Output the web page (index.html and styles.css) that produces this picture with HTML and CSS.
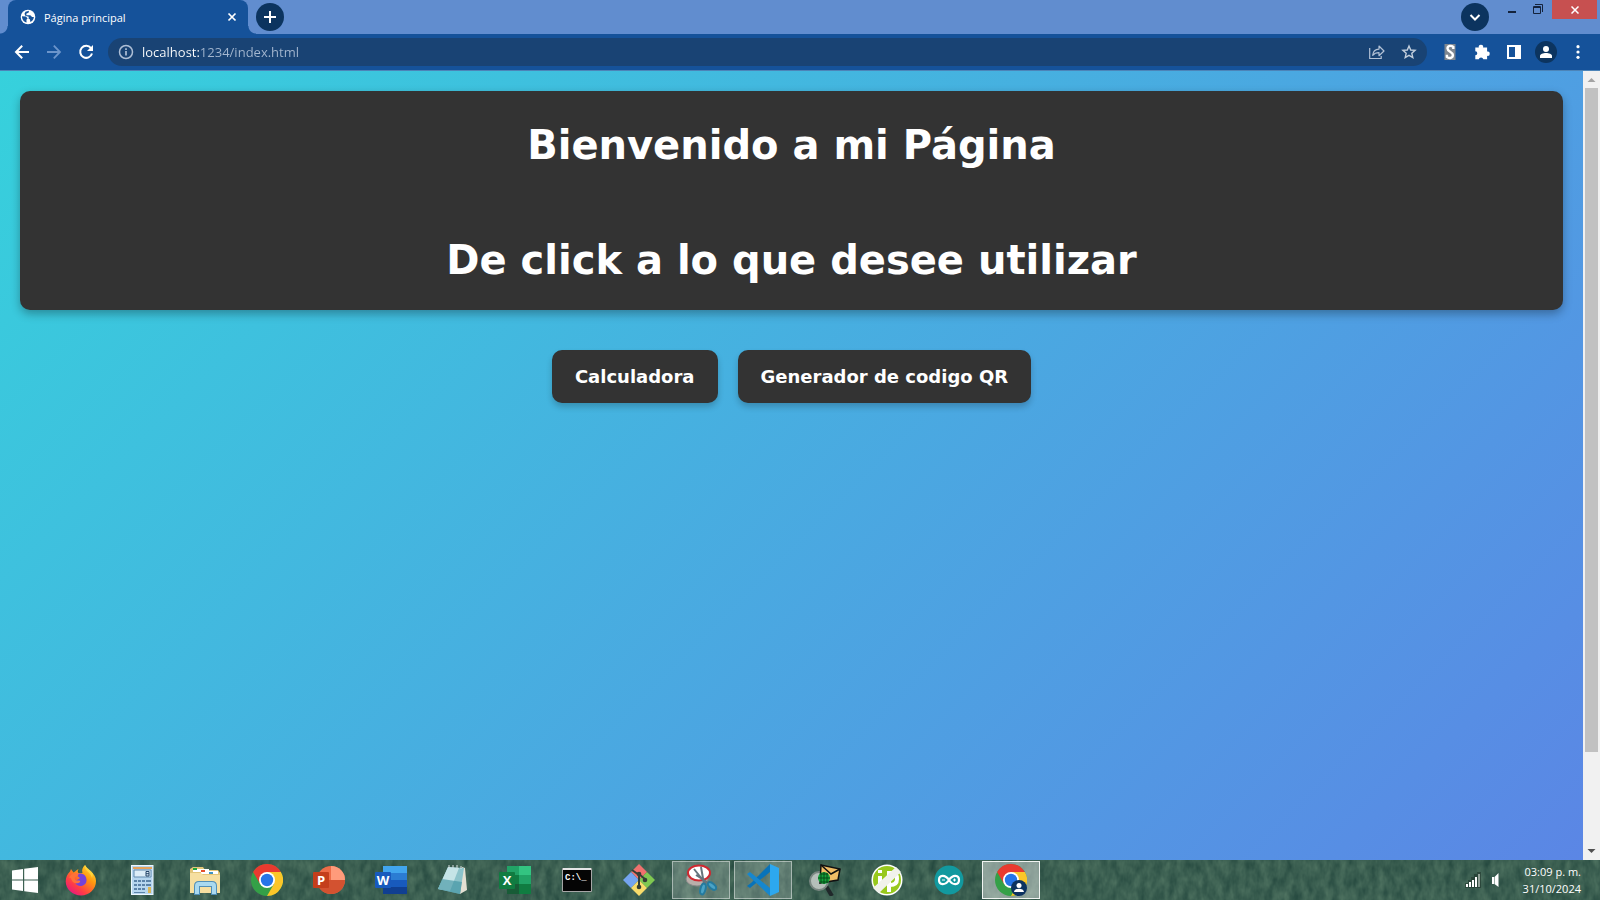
FILE: index.html
```
<!DOCTYPE html>
<html lang="es">
<head>
<meta charset="utf-8">
<title>Página principal</title>
<link rel="stylesheet" href="styles.css">
</head>
<body>
<div class="desktop">
  <header class="tabstrip">
    <div class="tab">
      <svg class="i18" viewBox="0 0 18 18"><circle cx="9" cy="9" r="7.3" fill="#fff"/><path d="M3 8.2l4 .3 1.6 2-1.2 1.3.2 2.6C5 14 3 11.500 3 8.200zM6.500 3.700L10 2.800l-.5 2-2 .8-.2 1.600 4 .1 1.800 1.600 1.800.2c-.2 2.500-1.800 4.400-3.600 5l-.3-2.500-1.500-1.200.3-1.700-3.500-1-.8-2z" fill="#15529a"/></svg>
      <span class="tab-title">Página principal</span>
      <button class="plain" aria-label="Cerrar pestaña"><svg class="i10" viewBox="0 0 10 10"><path d="M1.500 1.500l7 7M8.500 1.500l-7 7" stroke="#fff" stroke-width="1.700"/></svg></button>
    </div>
    <button class="round" aria-label="Nueva pestaña"><svg class="i14" viewBox="0 0 14 14"><path d="M7 1v12M1 7h12" stroke="#fff" stroke-width="2"/></svg></button>
    <div class="window-tools">
      <button class="round" aria-label="Buscar pestañas"><svg class="i14" viewBox="0 0 14 14"><path d="M2.500 5L7 9.500 11.500 5" fill="none" stroke="#fff" stroke-width="2"/></svg></button>
      <button class="win" aria-label="Minimizar"><svg class="i10" viewBox="0 0 10 10"><path d="M1 8h8" stroke="#14233c" stroke-width="2"/></svg></button>
      <button class="win" aria-label="Restaurar"><svg class="i10" viewBox="0 0 10 10"><path d="M.5 2.500h7v7h-7zM.5 3.500h7M2 .5h7.500V8" fill="none" stroke="#14233c"/></svg></button>
      <button class="win-close" aria-label="Cerrar"><svg class="i8" viewBox="0 0 8 8"><path d="M.5.5l7 7M7.500.5l-7 7" stroke="#fff" stroke-width="1.500"/></svg></button>
    </div>
  </header>

  <nav class="toolbar">
    <button class="plain nav" aria-label="Atrás"><svg class="i16" viewBox="0 0 16 16"><path d="M15 8H2M8.200 1.700L2 8l6.200 6.300" fill="none" stroke="#fff" stroke-width="2"/></svg></button>
    <button class="plain nav" aria-label="Adelante"><svg class="i16" viewBox="0 0 16 16"><path d="M1 8h13M7.800 1.700L14 8l-6.200 6.300" fill="none" stroke="#6c95cb" stroke-width="1.800"/></svg></button>
    <button class="plain nav" aria-label="Recargar"><svg class="i16" viewBox="0 0 16 16"><path d="M13 4.200A6 6 0 1 0 14 9.500" fill="none" stroke="#fff" stroke-width="2"/><path d="M15 1v6H9z" fill="#fff"/></svg></button>
    <div class="omnibox">
      <svg class="i16" viewBox="0 0 16 16"><circle cx="8" cy="8" r="6.500" fill="none" stroke="#aebfd6" stroke-width="1.500"/><path d="M8 7v4.500M8 4.300v1.700" stroke="#aebfd6" stroke-width="1.700"/></svg>
      <input class="url" type="text" value="localhost:1234/index.html" aria-label="Dirección">
      <button class="plain" aria-label="Compartir"><svg class="i16" viewBox="0 0 16 16"><path d="M.7 4v10.500h11.500V12" fill="none" stroke="#b2c1d5" stroke-width="1.200"/><path d="M3.700 11.300C4 7.700 6.500 5.300 10 5.100V2l5 5-5 4.700V8.600c-2.800 0-4.700.7-6.300 2.700z" fill="none" stroke="#b2c1d5" stroke-width="1.200" stroke-linejoin="round"/></svg></button>
      <button class="plain" aria-label="Marcador"><svg class="i16" viewBox="0 0 16 16"><path d="M8 2l1.700 4 4.400.4-3.300 2.900 1 4.300L8 11.400l-3.800 2.200 1-4.300-3.300-2.900L6.300 6z" fill="none" stroke="#c3cfdd" stroke-width="1.400"/></svg></button>
    </div>
    <div class="extensions">
      <button class="plain" aria-label="Extensión S"><svg class="i16" viewBox="0 0 16 16"><path fill="#7f8790" d="M2.500 0h11v16h-11z"/><path d="M11.300 5V2.900C9.500 1.400 5.500 1.200 5.500 4.500c0 3.400 5.400 3 5.400 6.600 0 3.500-4.300 3.500-6 1.900v-2.300" fill="none" stroke="#fff" stroke-width="2.400"/></svg></button>
      <button class="plain" aria-label="Extensiones"><svg class="i16" viewBox="0 0 16 16"><path d="M1.300 3.500h3.500a2.200 2.200 0 1 1 4.300 0h4v4a2.200 2.200 0 1 1 0 4.300v3.400H9.300a2.300 2.300 0 0 0-4.500 0H1.300v-4a2 2 0 0 0 0-4z" fill="#fff"/></svg></button>
      <button class="plain" aria-label="Panel lateral"><svg class="i16" viewBox="0 0 16 16"><path fill-rule="evenodd" d="M1 1h14v14H1zM3 3v10h6V3z" fill="#fff"/></svg></button>
      <button class="plain profile" aria-label="Perfil"><svg class="i14" viewBox="0 0 14 14"><circle cx="7" cy="4" r="3" fill="#fff"/><path d="M1 13v-2c0-4 12-4 12 0v2z" fill="#fff"/></svg></button>
      <button class="plain" aria-label="Menú"><svg class="i16" viewBox="0 0 16 16"><g fill="#fff"><circle cx="8" cy="2.700" r="1.600"/><circle cx="8" cy="8" r="1.600"/><circle cx="8" cy="13.300" r="1.600"/></g></svg></button>
    </div>
  </nav>

  <div class="viewport">
    <main class="page">
      <section class="hero">
        <h1>Bienvenido a mi Página</h1>
        <h1>De click a lo que desee utilizar</h1>
      </section>
      <div class="actions">
        <button class="action">Calculadora</button>
        <button class="action">Generador de codigo QR</button>
      </div>
    </main>
    <div class="scrollbar">
      <svg class="arrow" viewBox="0 0 17 17"><path d="M4.500 11l4-4 4 4z" fill="#a3a3a3"/></svg>
      <div class="track"><div class="thumb"></div></div>
      <svg class="arrow" viewBox="0 0 17 17"><path d="M4.500 6l4 4 4-4z" fill="#505050"/></svg>
    </div>
  </div>

  <footer class="taskbar">
    <svg class="texture" aria-hidden="true"><filter id="grain" x="0" y="0" width="100%" height="100%" color-interpolation-filters="sRGB"><feTurbulence type="fractalNoise" baseFrequency=".13 .07" numOctaves="3" seed="8"/><feColorMatrix values=".2 0 0 0 .13  .2 0 0 0 .27  .16 0 0 0 .235  0 0 0 0 1"/></filter><rect width="100%" height="100%" filter="url(#grain)"/></svg>
    <button class="start" aria-label="Inicio"><svg class="i26" viewBox="0 0 26 26"><path d="M0 3.500l11-1.600V12.500H0zM12.200 1.700L26 0v12.500H12.200zM0 13.600h11v10.500L0 22.500zM12.200 13.600H26V26l-13.800-1.800z" fill="#fff"/></svg></button>
    <div class="apps">
      <button class="app" aria-label="Firefox"><svg class="i32" viewBox="0 0 32 32"><defs><linearGradient id="ff" x1="1" y1="0" x2=".2" y2="1"><stop offset="0" stop-color="#fff04a"/><stop offset=".4" stop-color="#ff980e"/><stop offset=".75" stop-color="#ff3b47"/><stop offset="1" stop-color="#e31587"/></linearGradient></defs><path d="M20 1c1 3 3 4 5.500 6C29 10 31 13 31 17c0 8-6.500 14.500-15 14.500S.7 25 .7 17.500C.7 13 2.500 10 5 7.500L6 5l2.500 3.500c1 0 2.500-2.500 5-3.500-1 2-1 3 0 4h4C16.500 6 17.500 3 20 1z" fill="url(#ff)"/><path d="M11 11c4-3 10-1 10.500 4.500.4 4.500-3.400 6.900-6.500 6.500-3.500-.4-5.500-3-5.300-6 2 .5 3.800-.5 5.300-2z" fill="#7542d9"/><path d="M4 14c2-4.500 5-5.500 9.500-5 .2 3-1.500 3.500-3.500 4-.8 2.600.2 3.500 2.500 3.500 3.400-.3 3.400 1.500 1 2.500-2 .8-4.200.2-5.500-1C6 16 6.500 13 4 14z" fill="#ff7139"/><path d="M20 1c-2 5 6 7 7 13l1-4c-2-4-6-5-8-9z" fill="#ffd43b"/></svg></button>
      <button class="app" aria-label="Calculadora de Windows"><svg class="i32" viewBox="0 0 32 32"><rect x="4.500" y="1.500" width="21.500" height="29" fill="#b6d6ef" stroke="#edf7ff"/><path d="M6 3h19v2H6z" fill="#e5a35d"/><path d="M7 6h17v7H7z" fill="#dcedf8" stroke="#628bb0"/><path d="M19 7.500h3v4.500h-3zM19 9.700h3" fill="none" stroke="#26466a"/><g fill="#5b83a9"><path d="M7 16h3v2H7zM11 16h3v2h-3zM15 16h3v2h-3zM19 16h5v2h-5zM7 20h3v2H7zM11 20h3v2h-3zM15 20h3v2h-3zM19 20h5v2h-5zM7 24h3v2H7zM11 24h3v2h-3zM15 24h3v2h-3zM7 28h11v1H7z"/></g><path d="M21 23h3v6h-3z" fill="#d9b657"/></svg></button>
      <button class="app" aria-label="Explorador de archivos"><svg class="i32" viewBox="0 0 32 32"><path d="M1 5l3-2h10l2 3h13l2 3v19H1z" fill="#e4c678"/><path d="M4 5h16v3H4zM12 7h17v3H12z" fill="#fff"/><path d="M4 4h4v2H4z" fill="#22a53a"/><path d="M12 6h4v2h-4z" fill="#e5502c"/><path d="M20 8h4v2h-4z" fill="#3d93c4"/><path d="M1 9h11l2 2h17v18H1z" fill="#f6dfa0"/><path d="M8 31V22q0-2 2-2h13q2 0 2 2v9" fill="none" stroke="#518fb7" stroke-width="6"/><path d="M8 30V22q0-2 2-2h13q2 0 2 2v8" fill="none" stroke="#a9d9ef" stroke-width="4"/></svg></button>
      <button class="app" aria-label="Chrome"><svg class="i32" viewBox="0 0 32 32"><g id="chrome"><circle cx="16" cy="16" r="16" fill="#34a047"/><path d="M2.140 8A16 16 0 0 1 29.860 8H16L9.100 20z" fill="#e93a2f"/><path d="M29.860 8A16 16 0 0 1 16 32L22.900 20 16 8z" fill="#fcc629"/><circle cx="16" cy="16" r="8" fill="#fff"/><circle cx="16" cy="16" r="6.200" fill="#2675e8"/></g></svg></button>
      <button class="app" aria-label="PowerPoint"><svg class="i32" viewBox="0 0 32 32"><circle cx="18" cy="16" r="14" fill="#ed6c47"/><path d="M18 2a14 14 0 0 1 14 14H18z" fill="#ff9b7b"/><path d="M4 16h28a14 14 0 0 1-28 0z" fill="#d35230"/><rect y="8" width="16" height="16" rx="1" fill="#c43e1c"/><text class="glyph" x="8" y="20.500">P</text></svg></button>
      <button class="app" aria-label="Word"><svg class="i32" viewBox="0 0 32 32"><path fill="#41a5ee" d="M8 2h24v7H8z"/><path fill="#2b7cd3" d="M8 9h24v7H8z"/><path fill="#185abd" d="M8 16h24v7H8z"/><path fill="#103f91" d="M8 23h24v7H8z"/><rect y="8" width="16" height="16" rx="1" fill="#185abd"/><text class="glyph" x="8" y="20.500">W</text></svg></button>
      <button class="app" aria-label="Bloc de notas"><svg class="i32" viewBox="0 0 32 32"><path d="M25 3l3 1 2 22-7 4z" fill="#e4e0d2"/><path d="M11 3l16 1-4 26L1 25z" fill="#8cc3ca"/><path d="M11 3l11 1-9 23-12-2z" fill="#c5e4e7"/><path d="M5 15l20 3-2 12L1 25z" fill="#39909e" opacity=".6"/><path d="M12 1v3M16 1v3M20 1v3M24 2v3" stroke="#d9e1e2"/></svg></button>
      <button class="app" aria-label="Excel"><svg class="i32" viewBox="0 0 32 32"><path fill="#21a366" d="M8 2h12v9H8z"/><path fill="#33c481" d="M20 2h12v9H20z"/><path fill="#107c41" d="M8 11h12v9H8z"/><path fill="#21a366" d="M20 11h12v9H20z"/><path fill="#185c37" d="M8 20h12v10H8z"/><path fill="#107c41" d="M20 20h12v10H20z"/><rect y="8" width="16" height="17" rx="1" fill="#107c41"/><text class="glyph" x="8" y="21">X</text></svg></button>
      <button class="app" aria-label="Símbolo del sistema"><svg class="i32" viewBox="0 0 32 32"><path d="M1.500 4.500h29v23h-29z" fill="#050505" stroke="#a6a6a6"/><path d="M2 4h28v2H2z" fill="#e5e5e5"/><text class="cmd" x="4" y="16">C:\_</text></svg></button>
      <button class="app" aria-label="Git"><svg class="i32" viewBox="0 0 32 32"><path d="M16 0l8 8-8 8-8-8z" fill="#f0716d"/><path d="M24 8l8 8-8 8-8-8z" fill="#7fc851"/><path d="M8 8l8 8-8 8-8-8z" fill="#74a4ef"/><path d="M16 16l8 8-8 8-8-8z" fill="#f8dc6b"/><path d="M9 6l7 5v12M16 10l7 6" fill="none" stroke="#333e36" stroke-width="2"/><g fill="#333e36"><circle cx="16" cy="10" r="2.300"/><circle cx="22" cy="16" r="2.300"/><circle cx="16" cy="23" r="2.300"/></g></svg></button>
      <button class="app open" aria-label="Recortes"><svg class="i32" viewBox="0 0 32 32"><ellipse cx="12" cy="15" rx="11" ry="7" fill="#b9afaa" stroke="#888"/><ellipse cx="14" cy="9" rx="11" ry="7.500" fill="#fff" stroke="#cf2931" stroke-width="2"/><path d="M9 5l12 15M16 3l3 17M11 11l14 9" stroke="#65747c" stroke-width="2"/><ellipse cx="18" cy="25" rx="2.500" ry="5.500" transform="rotate(15 18 25)" fill="#4aa3c6" stroke="#247a9e" stroke-width="2"/><ellipse cx="27" cy="22" rx="2.500" ry="5" transform="rotate(-50 27 22)" fill="#4aa3c6" stroke="#247a9e" stroke-width="2"/></svg></button>
      <button class="app open" aria-label="Visual Studio Code"><svg class="i32" viewBox="0 0 32 32"><path d="M23 0L4 19l-4 3 3 2 20-16z" fill="#0873b9"/><path d="M0 10l3-2 20 16v8L4 14z" fill="#1687cf"/><path d="M23 0l9 4v24l-9 4z" fill="#2da8ef"/></svg></button>
      <button class="app" aria-label="Visor de correo"><svg class="i32" viewBox="0 0 32 32"><path d="M17 22l6 10" stroke="#20282a" stroke-width="4"/><circle cx="10" cy="17" r="9" fill="#b5bfba" stroke="#7a8782" stroke-width="2"/><path d="M12 1l19 4-2 11-18 3z" fill="#f1bd66" stroke="#111" stroke-width="1.500"/><path d="M12 1l10 9 9-5" fill="none" stroke="#111" stroke-width="1.500"/><circle cx="15" cy="14" r="6" fill="#13a23a"/><path d="M15 8v12M9 14h12M11 10h8M11 18h8M12 9v10M18 9v10" stroke="#064a18"/></svg></button>
      <button class="app" aria-label="ip"><svg class="i32" viewBox="0 0 32 32"><circle cx="16" cy="16" r="15.500" fill="#fff"/><circle cx="16" cy="16" r="14" fill="#98c91d"/><path d="M9 12v10q0 3-3 2M9 6v3M18 28V9h3q5 0 5 6t-7 6" fill="none" stroke="#fff" stroke-width="4"/><path d="M2 24L25 3l5 5L8 29z" fill="#f1f2eb"/></svg></button>
      <button class="app" aria-label="Arduino"><svg class="i32" viewBox="0 0 32 32"><circle cx="16" cy="16" r="14.500" fill="#12999f"/><path d="M16 16c-4-6-10-5-10 0s6 6 10 0c4-6 10-5 10 0s-6 6-10 0z" fill="none" stroke="#fff" stroke-width="2.200"/><path d="M9 16h3M20 16h3M21.500 14.500v3" stroke="#fff"/></svg></button>
      <button class="app active" aria-label="Chrome, Página principal"><svg class="i32" viewBox="0 0 32 32"><use href="#chrome"/><circle cx="24" cy="24" r="8" fill="#0c3260"/><circle cx="24" cy="21.500" r="2.500" fill="#fff"/><path d="M19 28c0-4.500 10-4.500 10 0z" fill="#fff"/></svg></button>
    </div>
    <div class="tray">
      <svg class="i16" viewBox="0 0 16 16"><path d="M0 11h3V8h3V5h3V2h3V0h4v16H0z" fill="#1f352b" opacity=".6"/><path d="M1 12h2v3H1zM4 10h2v5H4zM7 8h2v7H7zM10 5h2v10h-2z" fill="#fff"/><path d="M13 2h2v13h-2z" fill="#91a198"/></svg>
      <svg class="i16" viewBox="0 0 16 16"><path d="M3 5h2v7H3zM5.500 5L9.500 1v14L5.500 12z" fill="#fff"/></svg>
      <div class="clock"><time>03:09 p. m.</time><time>31/10/2024</time></div>
    </div>
  </footer>
</div>
</body>
</html>
```
FILE: styles.css
```
* { box-sizing: border-box; }
body { margin: 0; font-family: "Open Sans", "Noto Sans", sans-serif; }
button { border: 0; padding: 0; font: inherit; color: inherit; }
svg { display: block; flex: none; }
.desktop { height: 100vh; display: flex; flex-direction: column; overflow: hidden; }
.i8 { width: 8px; height: 8px; }
.i10 { width: 10px; height: 10px; }
.i14 { width: 14px; height: 14px; }
.i16 { width: 16px; height: 16px; }
.i18 { width: 18px; height: 18px; }
.i26 { width: 26px; height: 26px; }
.i32 { width: 32px; height: 32px; }
.plain { display: flex; align-items: center; justify-content: center; background: none; }

.tabstrip { display: flex; flex: none; height: 34px; padding: 0 3px 0 8px; background: #618dcf; }
.tab { position: relative; display: flex; align-items: center; gap: 7px; width: 240px; padding: 0 11px; background: #15529a; border-radius: 8px 8px 0 0; color: #fff; font-size: 11px; }
.tab::before, .tab::after { content: ""; position: absolute; bottom: 0; width: 8px; height: 8px; }
.tab::before { right: 100%; background: radial-gradient(circle at 0 0, transparent 7px, #15529a 8px); }
.tab::after { left: 100%; background: radial-gradient(circle at 100% 0, transparent 7px, #15529a 8px); }
.tab-title { flex: 1; }
.round { display: flex; align-items: center; justify-content: center; width: 28px; height: 28px; margin: 3px 8px; border-radius: 50%; background: #0c345f; }
.window-tools { display: flex; align-items: flex-start; margin-left: auto; }
.win { display: flex; justify-content: center; width: 26px; height: 18px; padding-top: 4px; background: none; }
.window-tools .round { margin-right: 10px; }
.win-close { display: flex; align-items: center; justify-content: center; width: 45px; height: 19px; margin-left: 1px; background: #c75050; }

.toolbar { display: flex; flex: none; align-items: center; height: 37px; padding: 0 14px 0 6px; background: #15529a; border-bottom: 1px solid #4c84b8; }
.nav { width: 32px; height: 28px; }
.omnibox { display: flex; flex: 1; align-items: center; gap: 16px; height: 28px; margin-left: 6px; padding: 0 10px; border-radius: 14px; background: #194374; }
.url { flex: 1; min-width: 0; margin-left: -8px; padding: 0; border: 0; outline: 0; font: 13px "Open Sans", "Noto Sans", sans-serif; background: linear-gradient(90deg, #fff 57px, #a4b7d0 57px); background-clip: text; -webkit-text-fill-color: transparent; }
.extensions { display: flex; align-items: center; gap: 16px; margin-left: 15px; }
.profile { width: 22px; height: 22px; margin: 0 -3px; border-radius: 50%; background: #0c345f; }

.viewport { display: flex; flex: 1; min-height: 0; }
.page { flex: 1; padding: 20px; background: linear-gradient(135deg, #36d1dc, #5b86e5); font-family: Verdana, "DejaVu Sans", sans-serif; color: #fff; }
.hero { display: flex; flex-direction: column; gap: 67px; padding: 30px 20px 26px; border-radius: 10px; background: #333; text-align: center; box-shadow: 0 4px 10px rgba(0, 0, 0, .3); }
.hero h1 { margin: 0; font-size: 40px; line-height: 48px; }
.actions { display: flex; justify-content: center; gap: 20px; margin-top: 40px; }
.action { height: 53px; padding: 0 23px; border-radius: 10px; background: #333; font-size: 18px; font-weight: bold; box-shadow: 0 4px 6px rgba(0, 0, 0, .2); }
.scrollbar { display: flex; flex-direction: column; width: 17px; background: #f1f1f1; }
.arrow { width: 17px; height: 17px; }
.track { flex: 1; padding: 0 2px; }
.thumb { height: 88%; background: #c1c1c1; }

.taskbar { position: relative; display: flex; flex: none; height: 40px; background: #3a5f50; color: #fff; }
.texture { position: absolute; inset: 0; width: 100%; height: 100%; }
.start, .apps, .tray { position: relative; }
.start { display: flex; align-items: center; justify-content: center; width: 52px; padding-right: 2px; background: none; }
.apps { display: flex; gap: 4px; }
.app { display: flex; align-items: center; justify-content: center; width: 58px; height: 38px; margin-top: 1px; border: 1px solid transparent; background: none; }
.open { border-color: rgba(255, 255, 255, .45); background: rgba(255, 255, 255, .2); }
.active { border-color: #f0f4f1; background: rgba(255, 255, 255, .42); }
.glyph { font: bold 13px "Open Sans", sans-serif; fill: #fff; text-anchor: middle; }
.cmd { font: bold 9px "Liberation Mono", monospace; fill: #fff; }
.tray { display: flex; align-items: center; gap: 8px; margin-left: auto; padding-right: 19px; }
.clock { display: flex; flex-direction: column; align-items: flex-end; margin-left: 10px; font-size: 11px; line-height: 17px; }
```
